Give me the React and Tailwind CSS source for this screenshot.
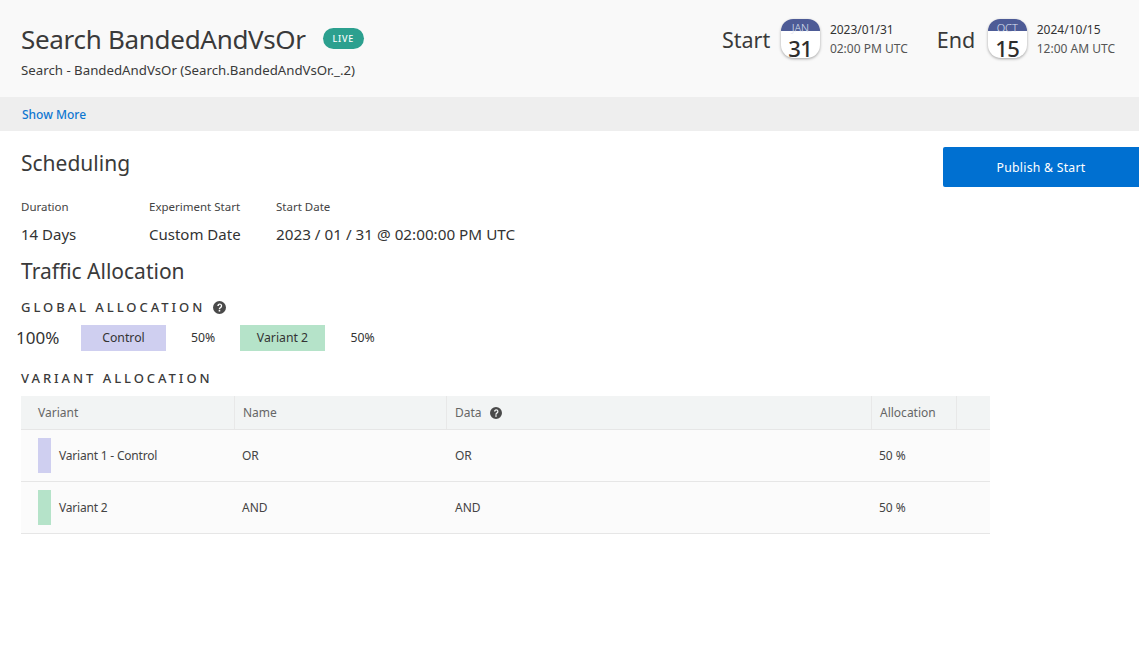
import React from 'react';

const FONT = { fontFamily: '"Noto Sans", sans-serif' };

function HelpIcon({ className }) {
    return (
        <svg viewBox="0 0 24 24" className={className} fill="#4a4a4a">
            <path d="M12 0a12 12 0 1 0 0 24 12 12 0 0 0 0-24zm1.4 19.4h-2.9v-2.8h2.9v2.8zm2.6-7.6c-.9.9-1.9 1.4-2.3 2.2-.2.4-.3.9-.3 1.4h-2.7c0-1 .1-1.8.5-2.5.5-1 1.6-1.6 2.5-2.5.5-.5.8-1 .8-1.7 0-1.1-.8-1.8-1.8-1.8-1.1 0-1.9.8-2 2.1H7.9C8 7 9.700 4.600 12.400 4.600c2.600 0 4.500 1.700 4.500 4.200 0 1.200-.3 2.200-.9 3z" />
        </svg>
    );
}

function CalendarBadge({ month, day }) {
    return (
        <div className="w-[39px] h-[39px] rounded-[13px] bg-white shadow-[0_1px_3px_rgba(0,0,0,0.35)] flex flex-col items-center">
            <div className="w-full h-[12px] pt-[5px] rounded-t-[13px] bg-[#4d5b96] text-[#dfe3f2] text-[11px] leading-[7px] text-center font-light">{month}</div>
            <div className="text-[22px] font-medium leading-[20px] mt-[7px] tracking-[-0.5px] text-[#2e2e2e]">{day}</div>
        </div>
    );
}

function DateBlock({ label, labelWidth, month, day, date, time }) {
    return (
        <div className="flex items-center">
            <span className={`${labelWidth} text-[21.500px] leading-[32px] mt-[2px] text-[#3a3a3a]`}>{label}</span>
            <div className="ml-[11px]"><CalendarBadge month={month} day={day} /></div>
            <div className="ml-[10px] text-[12px] leading-[19px]">
                <div className="text-[#333]">{date}</div>
                <div className="text-[#555]">{time}</div>
            </div>
        </div>
    );
}

const COLS = 'grid grid-cols-[214px_212px_425px_85px_33px]';

function VariantRow({ color, variant, name, data }) {
    return (
        <div className={`${COLS} h-[52px] items-center bg-[#fbfbfb] text-[12px] text-[#444] border-b border-[#e6e6e6]`}>
            <div className="flex items-center pl-[17px]">
                <div className={`w-[13px] h-[35px] ${color}`}></div>
                <span className="ml-[8px] tracking-[-0.2px]">{variant}</span>
            </div>
            <div className="pl-[7px]">{name}</div>
            <div className="pl-[8px]">{data}</div>
            <div className="pl-[7px]">50 %</div>
            <div></div>
        </div>
    );
}

export default function App() {
    return (
        <div style={FONT} className="min-h-[666px] bg-white text-[#333]">
            {/* Header */}
            <div className="h-[97px] bg-[#f9f9f9] flex justify-between pl-[21px] pr-[24px]">
                <div className="pt-[21px]">
                    <div className="flex items-center">
                        <h1 className="text-[26px] leading-[36px] tracking-[-0.3px] text-[#3a3a3a]">Search BandedAndVsOr</h1>
                        <span className="ml-[17px] -mt-[1px] w-[41px] h-[21px] rounded-full bg-[#2ca08f] text-white text-[9px] tracking-[0.08em] font-medium flex items-center justify-center">LIVE</span>
                    </div>
                    <div className="text-[13.250px] leading-[20px] mt-[3px] text-[#3a3a3a]">Search - BandedAndVsOr (Search.BandedAndVsOr._.2)</div>
                </div>
                <div className="flex gap-[29px] pt-[19px] items-start">
                    <DateBlock label="Start" labelWidth="w-[48px]" month="JAN" day="31" date="2023/01/31" time="02:00 PM UTC" />
                    <DateBlock label="End" labelWidth="w-[40px]" month="OCT" day="15" date="2024/10/15" time="12:00 AM UTC" />
                </div>
            </div>

            {/* Show more */}
            <div className="h-[34px] bg-[#eeeeee] flex items-center pl-[22px] pt-[2px]">
                <a className="text-[12px] text-[#0f77d1] font-medium">Show More</a>
            </div>

            {/* Scheduling */}
            <div className="pl-[21px]">
                <div className="flex justify-between items-start">
                    <h2 className="text-[21px] leading-[28px] mt-[18px] text-[#3a3a3a]">Scheduling</h2>
                    <button className="mt-[16px] w-[196px] h-[40px] pt-[2px] bg-[#0070d1] rounded-l-[2px] text-white text-[12.250px] tracking-[0.02em]">Publish &amp; Start</button>
                </div>

                <div className="flex mt-[11px]">
                    <div className="w-[128px]">
                        <div className="text-[11.500px] leading-[18px] text-[#444]">Duration</div>
                        <div className="text-[15px] leading-[20px] mt-[8px] text-[#333]">14 Days</div>
                    </div>
                    <div className="w-[127px]">
                        <div className="text-[11.500px] leading-[18px] text-[#444]">Experiment Start</div>
                        <div className="text-[15px] leading-[20px] mt-[8px] text-[#333]">Custom Date</div>
                    </div>
                    <div>
                        <div className="text-[11.500px] leading-[18px] text-[#444]">Start Date</div>
                        <div className="text-[15.250px] leading-[20px] mt-[8px] text-[#333]">2023 / 01 / 31 @ 02:00:00 PM UTC</div>
                    </div>
                </div>

                <h2 className="text-[21px] leading-[28px] mt-[13px] text-[#3a3a3a]">Traffic Allocation</h2>

                <div className="flex items-center mt-[12px]">
                    <span className="text-[13px] leading-[20px] tracking-[2.950px] text-[#3a3a3a] font-medium">GLOBAL ALLOCATION</span>
                    <HelpIcon className="w-[13px] h-[13px] ml-[8px]" />
                </div>

                <div className="flex items-center mt-[8px] -ml-[5px] h-[26px]">
                    <span className="w-[65px] text-[17px] text-[#333]">100%</span>
                    <div className="w-[85px] h-[26px] bg-[#cfcff0] flex items-center justify-center text-[12.250px]">Control</div>
                    <span className="w-[74px] text-center text-[12.250px]">50%</span>
                    <div className="w-[85px] h-[26px] bg-[#b5e3c9] flex items-center justify-center text-[12.250px]">Variant 2</div>
                    <span className="w-[75px] text-center text-[12.250px]">50%</span>
                </div>

                <div className="text-[13px] leading-[20px] tracking-[2.950px] text-[#3a3a3a] font-medium mt-[17px]">VARIANT ALLOCATION</div>

                {/* Table */}
                <div className="w-[969px] mt-[8px]">
                    <div className={`${COLS} h-[34px] items-center bg-[#f2f4f4] text-[12px] text-[#666] border-b border-[#e6e6e6]`}>
                        <div className="pl-[17px] h-full flex items-center border-r border-[#e8e8e8]">Variant</div>
                        <div className="pl-[8px] h-full flex items-center border-r border-[#e8e8e8]">Name</div>
                        <div className="pl-[8px] h-full flex items-center border-r border-[#e8e8e8]">
                            Data
                            <HelpIcon className="w-[12px] h-[12px] ml-[8px]" />
                        </div>
                        <div className="pl-[8px] h-full flex items-center border-r border-[#e8e8e8]">Allocation</div>
                        <div></div>
                    </div>
                    <VariantRow color="bg-[#cfcff0]" variant="Variant 1 - Control" name="OR" data="OR" />
                    <VariantRow color="bg-[#b5e3c9]" variant="Variant 2" name="AND" data="AND" />
                </div>
            </div>
        </div>
    );
}
